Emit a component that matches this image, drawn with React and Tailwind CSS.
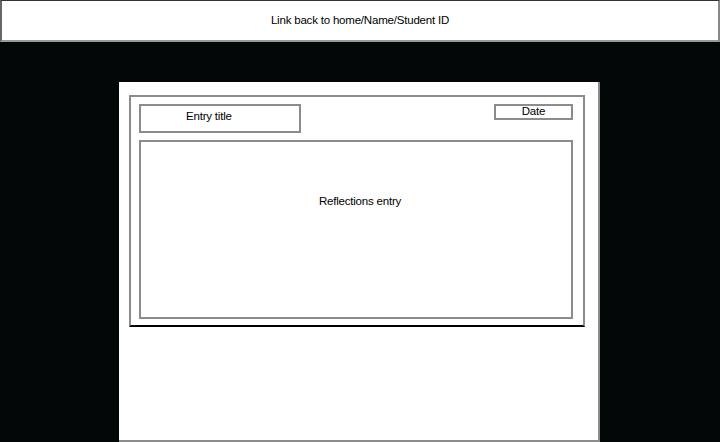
import React from 'react';

const App = () => {
  return (
    <div className="h-[442px] w-[720px] overflow-hidden bg-[#030708] font-['Liberation_Sans',sans-serif] text-black">
      <header className="flex h-[42px] items-center justify-center border-t border-l-2 border-r-2 border-b-2 border-t-[#333] border-l-[#666] border-r-[#888] border-b-[#999] bg-white">
        <span className="text-[11.5px] tracking-[-0.2px]">Link back to home/Name/Student ID</span>
      </header>

      <main className="ml-[119px] mt-[40px] h-[360px] w-[481px] border-r-2 border-b-2 border-[#8c8c8c] bg-white pl-[10px] pt-[13px]">
        <div className="flex h-[232px] w-[456px] flex-col border-2 border-b-black border-[#8c8c8c] pl-[8px] pr-[10px] pt-[7px]">
          <div className="flex items-start justify-between">
            <div className="flex h-[29px] w-[162px] items-center border-2 border-[#8c8c8c] pb-[3px] pl-[45px]">
              <span className="text-[11.5px] tracking-[-0.2px]">Entry title</span>
            </div>
            <div className="flex h-[16px] w-[79px] items-center justify-center border-2 border-[#8c8c8c] pb-[1px]">
              <span className="text-[11.5px] tracking-[-0.2px]">Date</span>
            </div>
          </div>
          <div className="mt-[7px] flex h-[179px] w-[434px] items-start justify-center border-2 border-[#8c8c8c] pl-[8px] pt-[51px]">
            <span className="text-[11.5px] tracking-[-0.2px]">Reflections entry</span>
          </div>
        </div>
      </main>
    </div>
  );
};

export default App;
